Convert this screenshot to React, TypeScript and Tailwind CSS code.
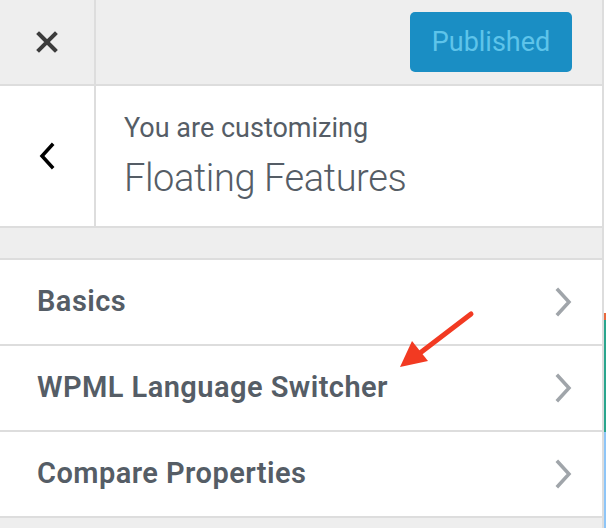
import React from "react";

const font = { fontFamily: "Roboto, 'Noto Sans', sans-serif" };

function ChevronRight() {
  return (
    <svg width="18" height="30" viewBox="0 0 18 30" fill="none">
      <path d="M3 3 L14 15 L3 27" stroke="#a0a5aa" strokeWidth="3.5" strokeLinecap="square" />
    </svg>
  );
}

function Row({ label }: { label: string }) {
  return (
    <div className="h-[86px] bg-white border-b-2 border-[#dddddd] flex items-center justify-between pl-[37px] pr-[29px]">
      <span className="text-[29px] font-semibold text-[#555d66] tracking-[0.45px]">{label}</span>
      <ChevronRight />
    </div>
  );
}

export default function App() {
  return (
    <div className="w-[606px] h-[528px] overflow-hidden flex bg-white" style={font}>
      <div className="relative w-[604px] h-full flex flex-col border-r-2 border-[#dddddd] bg-[#eeeeee]">
        {/* header */}
        <div className="h-[86px] flex border-b-2 border-[#dddddd] bg-[#eeeeee] shrink-0">
          <div className="w-[96px] border-r-2 border-[#dddddd] flex items-center justify-center">
            <svg width="22" height="22" viewBox="0 0 22 22">
              <path d="M3 3 L19 19 M19 3 L3 19" stroke="#3c3c3c" strokeWidth="4" strokeLinecap="square" />
            </svg>
          </div>
          <div className="flex-1 flex items-center justify-end pr-[30px]">
            <div className="w-[162px] h-[60px] rounded-[5px] bg-[#1a8ec4] flex items-center justify-center text-[27px] text-[#5ec4ea]">
              Published
            </div>
          </div>
        </div>
        {/* customizing */}
        <div className="h-[142px] flex border-b-2 border-[#dddddd] bg-white shrink-0">
          <div className="w-[96px] border-r-2 border-[#dddddd] flex items-center justify-center">
            <svg width="18" height="28" viewBox="0 0 18 28">
              <path d="M14 3 L4 14 L14 25" stroke="#000" strokeWidth="3.5" fill="none" strokeLinecap="square" />
            </svg>
          </div>
          <div className="flex-1 flex flex-col pl-[28px] pt-[27px]">
            <div className="text-[27px] leading-[30px] text-[#555d66]">You are customizing</div>
            <div className="text-[38px] leading-[44px] font-light text-[#555d66] mt-[13px] tracking-[-0.4px]">Floating Features</div>
          </div>
        </div>
        {/* gray band */}
        <div className="h-[32px] border-b-2 border-[#dddddd] bg-[#eeeeee] shrink-0" />
        <Row label="Basics" />
        <Row label="WPML Language Switcher" />
        <Row label="Compare Properties" />
        <div className="flex-1 bg-[#eeeeee]" />
        {/* annotation arrow */}
        <svg className="absolute left-0 top-0 pointer-events-none" width="604" height="528" viewBox="0 0 604 528">
          <line x1="471" y1="314" x2="420" y2="353" stroke="#f23a22" strokeWidth="5" strokeLinecap="round" />
          <polygon points="400,367 412,341 428,361" fill="#f23a22" />
        </svg>
      </div>
      <div className="w-[2px] h-full flex flex-col">
        <div className="h-[313px] bg-white" />
        <div className="h-[7px] bg-[#e8693e]" />
        <div className="h-[112px] bg-[#2aa58d]" />
        <div className="flex-1 bg-[#8ec5f7]" />
      </div>
    </div>
  );
}
